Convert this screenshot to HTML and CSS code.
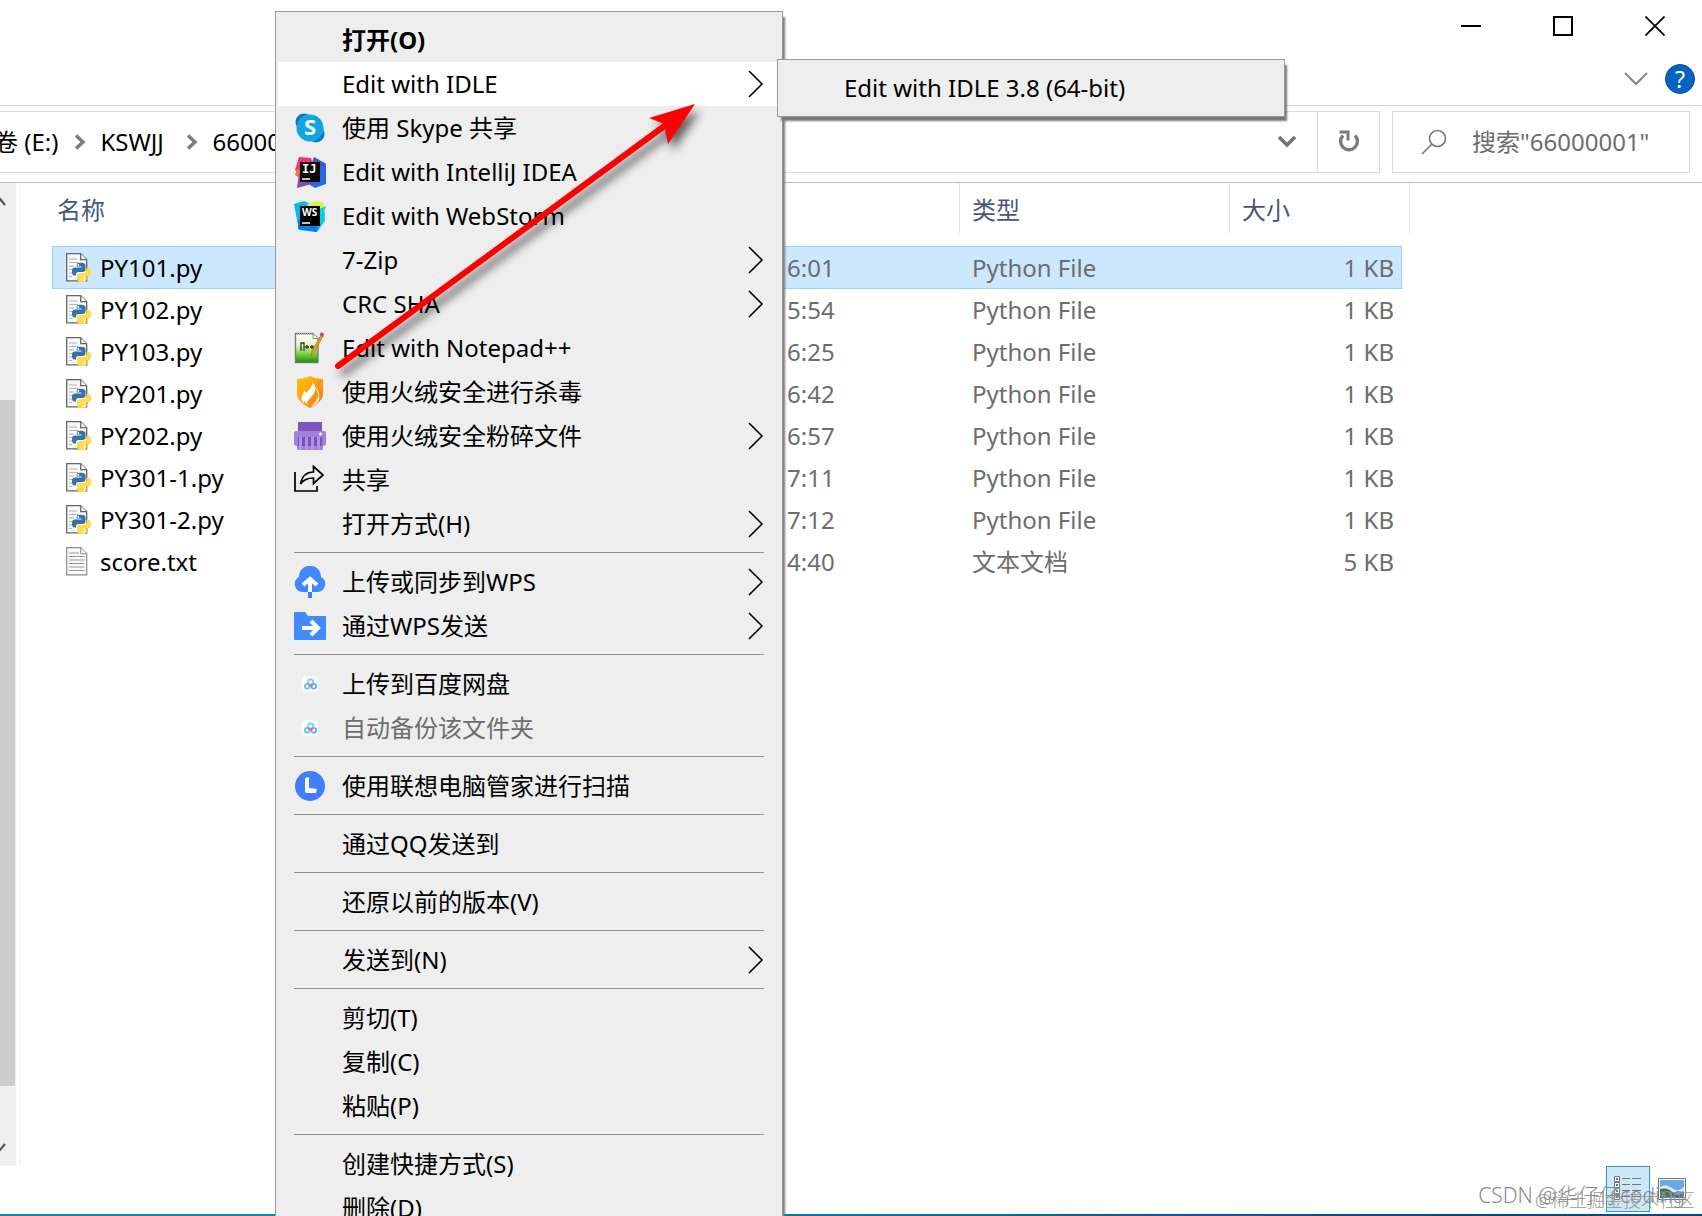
FILE: index.html
```html
<!DOCTYPE html>
<html lang="zh-CN">
<head>
<meta charset="utf-8">
<title>66000001</title>
<link rel="stylesheet" href="styles.css">
</head>
<body>
<svg class="defs" aria-hidden="true">
  <symbol id="chev" viewBox="0 0 16 28"><path d="M1 1l13 13L1 27" fill="none" stroke="#000" stroke-width="1.6"/></symbol>
  <symbol id="crumb" viewBox="0 0 12 16"><path d="M2 1.500l7 6.500-7 6.500" fill="none" stroke="#7d7d7d" stroke-width="3.400"/></symbol>
  <symbol id="py" viewBox="0 0 26 30">
    <path d="M.7.700h14l6 6v21.100H.7z" fill="#f7f7f7" stroke="#666" stroke-width="1.300"/>
    <path d="M14.700.700v6h6" fill="#fff" stroke="#666" stroke-width="1.300"/>
    <path d="M3 6h8M3 9.500h9M3 13h5M3 16.500h4M3 20h3M3 23.500h3" stroke="#b5b5b5" stroke-width="1.200"/>
    <path d="M11 10.500c1-1 6-1 7.500 0 1.500 1 1 2 1 5.500 0 2-1 3-3 3h-4c-2 0-2.500 1-2.500 3.500H8.500c-2 0-2.700-2-2.500-4.500 0-2.500 1-3.500 3.500-3.500h6v-1h-5z" fill="#3572a5"/>
    <circle cx="12.300" cy="12" r=".9" fill="#fff"/>
    <path d="M20.500 15h2c2 0 3 2 2.700 5-.2 2.500-1.200 3.500-3.500 3.500h-5v1H21c0 3-1 4.500-5 4.500-4.200 0-5-1.500-5-4v-2c0-2 1-3 3-3h4c2 0 2.500-1.500 2.500-5z" fill="#ffdb4d"/>
    <circle cx="18.500" cy="26.800" r=".9" fill="#fff"/>
  </symbol>
  <symbol id="txt" viewBox="0 0 26 30">
    <path d="M.7.700h14l6 6v21.100H.7z" fill="#f9f9f9" stroke="#8a8a8a" stroke-width="1.200"/>
    <path d="M14.700.700v6h6" fill="#fff" stroke="#8a8a8a"/>
    <path d="M3 6h10M3 9.500h15.500M3 13h15.500M3 16.500h15.500M3 20h15.500M3 23.500h15.500" stroke="#9a9a9a" stroke-width="1.200"/>
  </symbol>
  <symbol id="baidu" viewBox="0 0 32 32">
    <rect x="8" y="8" width="16" height="16" rx="4" fill="#fff"/>
    <g fill="none" stroke-width="1.700"><circle cx="13.200" cy="18.200" r="2.400" stroke="#5cc4f0"/><circle cx="19.800" cy="18.200" r="2.400" stroke="#52b4f4"/><circle cx="16.500" cy="14" r="2.600" stroke="#6fcff5"/><path d="M14 16l2.500 2 2.500-2" stroke="#f2617b"/></g>
  </symbol>
</svg>

<div class="window">
  <header class="titlebar">
    <button class="winbtn" aria-label="最小化"><svg width="20" height="20"><path d="M0 10h20" stroke="#000" stroke-width="2"/></svg></button>
    <button class="winbtn" aria-label="最大化"><svg width="20" height="20"><path d="M1 1h18v18H1z" fill="none" stroke="#000" stroke-width="2"/></svg></button>
    <button class="winbtn" aria-label="关闭"><svg width="20" height="20"><path d="M.5.500l19 19M19.500.500l-19 19" stroke="#000" stroke-width="1.800"/></svg></button>
  </header>
  <div class="ribbon">
    <button class="plain" aria-label="展开功能区"><svg width="24" height="14"><path d="M1 1l11 11L23 1" fill="none" stroke="#868686" stroke-width="2"/></svg></button>
    <button class="help" aria-label="帮助">?</button>
  </div>
  <div class="toolbar">
    <nav class="address" aria-label="地址">
      <a href="#">卷 (E:)</a><svg class="sep" width="12" height="16"><use href="#crumb"/></svg>
      <a class="folder" href="#">KSWJJ</a><svg class="sep" width="12" height="16"><use href="#crumb"/></svg>
      <a href="#">66000001</a>
      <button class="drop" aria-label="历史位置"><svg width="20" height="14"><path d="M2 2l8 8 8-8" fill="none" stroke="#757575" stroke-width="3.600"/></svg></button>
      <button class="refresh" aria-label="刷新"><svg width="22" height="24"><path d="M5 5.500A8.400 8.400 0 1 0 17 5.500" fill="none" stroke="#7b7b7b" stroke-width="3.400"/><path d="M1.500 2h8.500v8.500" fill="none" stroke="#7b7b7b" stroke-width="3"/></svg></button>
    </nav>
    <label class="search"><svg width="26" height="26"><circle cx="16.500" cy="9.500" r="8" fill="none" stroke="#777" stroke-width="1.600"/><path d="M10.500 15.500L1 25" stroke="#777" stroke-width="1.600"/></svg><input type="text" placeholder='搜索"66000001"' aria-label="搜索"></label>
  </div>
  <main class="content">
    <div class="scroll" aria-hidden="true">
      <svg class="scrollarrow" width="16" height="24"><path d="M-5 21L0 16l5 6" fill="none" stroke="#555" stroke-width="2.200"/></svg>
      <div class="thumb"></div>
      <svg class="scrollarrow" width="16" height="24"><path d="M-4 5l3 4 6-7" fill="none" stroke="#555" stroke-width="2.200"/></svg>
    </div>
    <div class="files">
      <table>
        <colgroup><col class="c-name"><col class="c-date"><col class="c-type"><col class="c-size"></colgroup>
        <thead><tr><th class="name">名称</th><th></th><th>类型</th><th class="last">大小</th></tr></thead>
        <tbody>
          <tr class="gap"><td colspan="4"></td></tr>
          <tr class="sel"><td class="name"><svg><use href="#py"/></svg>PY101.py</td><td class="time">6:01</td><td>Python File</td><td class="size">1 KB</td></tr>
          <tr><td class="name"><svg><use href="#py"/></svg>PY102.py</td><td class="time">5:54</td><td>Python File</td><td class="size">1 KB</td></tr>
          <tr><td class="name"><svg><use href="#py"/></svg>PY103.py</td><td class="time">6:25</td><td>Python File</td><td class="size">1 KB</td></tr>
          <tr><td class="name"><svg><use href="#py"/></svg>PY201.py</td><td class="time">6:42</td><td>Python File</td><td class="size">1 KB</td></tr>
          <tr><td class="name"><svg><use href="#py"/></svg>PY202.py</td><td class="time">6:57</td><td>Python File</td><td class="size">1 KB</td></tr>
          <tr><td class="name"><svg><use href="#py"/></svg>PY301-1.py</td><td class="time">7:11</td><td>Python File</td><td class="size">1 KB</td></tr>
          <tr><td class="name"><svg><use href="#py"/></svg>PY301-2.py</td><td class="time">7:12</td><td>Python File</td><td class="size">1 KB</td></tr>
          <tr><td class="name"><svg><use href="#txt"/></svg>score.txt</td><td class="time">4:40</td><td>文本文档</td><td class="size">5 KB</td></tr>
        </tbody>
      </table>
    </div>
  </main>
  <footer class="status">
    <button class="view on" aria-label="详细信息"><svg width="28" height="26"><g fill="#fff" stroke="#777"><path d="M.5.500h5v5h-5zM.5 6.500h5v5h-5zM.5 12.500h5v5h-5zM.5 18.500h5v5h-5z"/></g><path d="M2 3h2M2 9h2M2 15h2M2 21h2" stroke="#3b82c4" stroke-width="2"/><path d="M8 2.500h8m2 0h9M8 8.500h8m2 0h9M8 14.500h8m2 0h9M8 20.500h8m2 0h9" stroke="#777"/></svg></button>
    <button class="view" aria-label="大缩略图"><svg width="28" height="22"><path d="M.5.500h27v21H.5z" fill="#fff" stroke="#777"/><path d="M2 2h24v18H2z" fill="#6ba8ea"/><path d="M2 9q6-4 12 1t12-1v5H2z" fill="#d5e8f6"/><path d="M2 11q8-2 12 3t12 1v3H2z" fill="#47774b"/><path d="M2 17h24v3H2z" fill="#3b6ea0"/></svg></button>
  </footer>
  <div class="taskbar"></div>
</div>

<div class="menu main" role="menu">
  <button class="item bold"><span class="ico"></span>打开(O)</button>
  <button class="item hot"><span class="ico"></span>Edit with IDLE<svg class="more"><use href="#chev"/></svg></button>
  <button class="item"><svg class="ico" viewBox="0 0 32 32"><circle cx="10" cy="10" r="8.500" fill="#0078c8"/><circle cx="22" cy="22" r="8.500" fill="#0a78c6"/><circle cx="16" cy="16" r="13.500" fill="#11a6df"/><text x="16" y="23" class="skype">S</text></svg>使用 Skype 共享</button>
  <button class="item"><svg class="ico" viewBox="0 0 32 32"><path d="M5 1l12 1 4 12-13 5-7-5z" fill="#f2346b"/><path d="M3 13l9 2-3 9-8-5z" fill="#ef7b25"/><path d="M5 17l13 11-15 4z" fill="#8f4f9e"/><path d="M20 1l12 7v20l-11 4-8-5z" fill="#2b68e8"/><path d="M20 1l12 7-9 5-6-4z" fill="#4b56c8"/><path d="M6 6h20v20H6z" fill="#090909"/><text x="8" y="17" class="jb">IJ</text><path d="M8 23h8" stroke="#fff" stroke-width="1.500"/></svg>Edit with IntelliJ IDEA</button>
  <button class="item"><svg class="ico" viewBox="0 0 32 32"><path d="M0 4l10-3 14 6 7 6-1 9-7 10-18-2z" fill="#00b9ed"/><path d="M4 20l20 3-1 9-19-3z" fill="#087cf5"/><path d="M13 4l10-3 7 2-2 8-12 2z" fill="#dcf047"/><path d="M25 9l7-3-2 6 1 9-6 4z" fill="#10cce0"/><path d="M6 6h20v20H6z" fill="#000"/><text x="8" y="16" class="jb ws">WS</text><path d="M8 23h8" stroke="#fff" stroke-width="1.500"/></svg>Edit with WebStorm</button>
  <button class="item"><span class="ico"></span>7-Zip<svg class="more"><use href="#chev"/></svg></button>
  <button class="item"><span class="ico"></span>CRC SHA<svg class="more"><use href="#chev"/></svg></button>
  <button class="item"><svg class="ico" viewBox="0 0 32 32"><defs><linearGradient id="np" x2="0" y2="1"><stop stop-color="#fff"/><stop offset=".4" stop-color="#e6f5c4"/><stop offset=".75" stop-color="#6cca26"/><stop offset="1" stop-color="#138c19"/></linearGradient></defs><path d="M1.500 1.500H19l5 5v24H1.500z" fill="url(#np)" stroke="#777" stroke-width="1.300"/><path d="M3 2h16" stroke="#aaa" stroke-width="2" stroke-dasharray="1 1"/><path d="M19 1.500v5h5" fill="#fff" stroke="#888"/><path d="M7 19v-8h3v8M11 15h4m-2-2v4m3-2h4m-2-2v4" fill="none" stroke="#333" stroke-width="1.300"/><path d="M17 24l1-5L27 3l2 1-9 17z" fill="#e6a32e" stroke="#a66b18" stroke-width=".7"/><path d="M26 3l1-3 3 2-1 3z" fill="#c23b4d"/></svg>Edit with Notepad++</button>
  <button class="item"><svg class="ico" viewBox="0 0 32 32"><defs><linearGradient id="hr" x2="1" y2="1"><stop stop-color="#ffc414"/><stop offset=".5" stop-color="#ffa00c"/><stop offset="1" stop-color="#f46e1b"/></linearGradient></defs><path d="M16 0c4 2 8 3 13 3v15c0 6-6 10-13 14C9 28 3 24 3 18V3c5 0 9-1 13-3z" fill="url(#hr)"/><path d="M18 5c1 4-1 7-4 10-4 4-6 9-1 13 0-6 9-8 8-16 5 6 4 12-4 18 6-2 9-5 8-11 0-5-5-8-7-14z" fill="#fff"/><path d="M11 15c-4 5-5 9-1 12 0-5 6-7 7-11-3 2-5 2-6-1z" fill="#fff"/></svg>使用火绒安全进行杀毒</button>
  <button class="item"><svg class="ico" viewBox="0 0 32 32"><path d="M4 2h24v10H4z" fill="#8058bd"/><path d="M2 11h28q2 0 2 2v10q0 3-3 3v3q0 1-2 1H5q-2 0-2-1v-3q-3 0-3-3V13q0-2 2-2z" fill="#a080dc"/><path d="M4 17h24v9H4z" fill="#7951b4"/><path d="M5 17h3v13H5zM11 17h3v13h-3zM17 17h3v13h-3zM23 17h3v13h-3z" fill="#b091e4"/><circle cx="26.500" cy="14" r="1.500" fill="#fff"/></svg>使用火绒安全粉碎文件<svg class="more"><use href="#chev"/></svg></button>
  <button class="item"><svg class="ico" viewBox="0 0 32 32"><g fill="none" stroke="#000" stroke-width="1.700"><path d="M1 8v19h22v-5"/><path d="M6.500 20C8 12 12 8 19.500 8V2.500L29 11l-9.500 8.500V14C14 14 10 15 6.500 20z"/></g></svg>共享</button>
  <button class="item"><span class="ico"></span>打开方式(H)<svg class="more"><use href="#chev"/></svg></button>
  <hr>
  <button class="item"><svg class="ico" viewBox="0 0 32 32"><path d="M8 26a8 8 0 0 1-3-15C5-4 27-4 27 11a8 8 0 0 1-3 15z" fill="#4189fb"/><path d="M9 19l7-6 7 6M16 14v12" fill="none" stroke="#fff" stroke-width="4"/><path d="M14 26h4v6h-4z" fill="#3686f7"/></svg>上传或同步到WPS<svg class="more"><use href="#chev"/></svg></button>
  <button class="item"><svg class="ico" viewBox="0 0 32 32"><path d="M0 3q0-1 1-1h10l3 4h17q1 0 1 1v22q0 1-1 1H1q-1 0-1-1z" fill="#418aff"/><path d="M8 18h15M17 11l7 7-7 7" fill="none" stroke="#fff" stroke-width="4"/></svg>通过WPS发送<svg class="more"><use href="#chev"/></svg></button>
  <hr>
  <button class="item"><svg class="ico"><use href="#baidu"/></svg>上传到百度网盘</button>
  <button class="item" disabled><svg class="ico"><use href="#baidu"/></svg>自动备份该文件夹</button>
  <hr>
  <button class="item"><svg class="ico" viewBox="0 0 32 32"><circle cx="16" cy="16" r="15" fill="#427dfa"/><path d="M11 8l4-1v11l8 1-1 4H13q-2 0-2-2z" fill="#fff"/></svg>使用联想电脑管家进行扫描</button>
  <hr>
  <button class="item"><span class="ico"></span>通过QQ发送到</button>
  <hr>
  <button class="item"><span class="ico"></span>还原以前的版本(V)</button>
  <hr>
  <button class="item"><span class="ico"></span>发送到(N)<svg class="more"><use href="#chev"/></svg></button>
  <hr>
  <button class="item"><span class="ico"></span>剪切(T)</button>
  <button class="item"><span class="ico"></span>复制(C)</button>
  <button class="item"><span class="ico"></span>粘贴(P)</button>
  <hr>
  <button class="item"><span class="ico"></span>创建快捷方式(S)</button>
  <button class="item"><span class="ico"></span>删除(D)</button>
</div>
<div class="menu sub" role="menu">
  <button class="item"><span class="ico"></span>Edit with IDLE 3.8 (64-bit)</button>
</div>
<svg class="pointer" viewBox="0 0 380 280" aria-hidden="true"><path d="M8 266L337 24" stroke="#f00" stroke-width="6" stroke-linecap="round"/><path d="M365 4l-46 14 15 6 4 20z" fill="#f00"/></svg>
<div class="mark juejin">@稀土掘金技术社区</div>
<div class="mark csdn">CSDN @华仔仔coding</div>
</body>
</html>
```
FILE: styles.css
```css
* { box-sizing: border-box; }
body {
  margin: 0;
  height: 100vh;
  overflow: hidden;
  position: relative;
  background: #fff;
  color: #000;
  font: 24px/32px "Noto Sans", "Noto Sans CJK SC", sans-serif;
}
button, input { font: inherit; color: inherit; border: 0; padding: 0; background: none; }
a { color: inherit; text-decoration: none; }
svg { display: block; flex: none; }
.defs { position: absolute; width: 0; height: 0; }

.window { display: flex; flex-direction: column; height: 100%; }
.titlebar { display: flex; justify-content: flex-end; height: 52px; padding-right: 1px; }
.winbtn { width: 92px; display: grid; place-items: center; }
.ribbon {
  display: flex; justify-content: flex-end; align-items: center; gap: 17px;
  height: 54px; padding-right: 7px; border-bottom: 1px solid #d9d9d9;
}
.help {
  width: 30px; height: 30px; border-radius: 50%;
  background: #0563c1; border: 1px solid #0a4c94; color: #fff; line-height: 28px; font-size: 23px;
}
.toolbar {
  display: flex; gap: 12px; height: 77px; padding: 5px 12px 9px 0;
  border-bottom: 1px solid #bcbcbc;
}
.address {
  flex: 1; display: flex; align-items: center;
  border: 1px solid #d9d9d9; border-left: 0; white-space: nowrap;
  margin-left: -6px;
}
.address .sep { margin: 0 14px 0 16px; }
.folder { min-width: 70px; }
.drop { margin-left: auto; width: 60px; display: grid; place-items: center; }
.refresh { width: 62px; align-self: stretch; border-left: 1px solid #d9d9d9; display: grid; place-items: center; }
.search { width: 298px; display: flex; align-items: center; gap: 25px; border: 1px solid #d9d9d9; padding-left: 28px; }
.search input { flex: 1; min-width: 0; outline: 0; }
.search input::placeholder { color: #6d6d6d; opacity: 1; }

.content { flex: 1; display: flex; min-height: 0; }
.scroll { width: 21px; padding-right: 3px; border-right: 2px solid #f7f7f7; background: #efefef content-box; display: flex; flex-direction: column; }
.thumb { flex: 1; width: 15px; margin: 193px 0 56px; background: #cdcdcd; }
.files { flex: 1; padding-left: 31px; }
table { border-collapse: separate; border-spacing: 0; table-layout: fixed; width: 1350px; }
.c-name { width: 735px; }
.c-date { width: 172px; }
.c-type { width: 270px; }
.c-size { width: 173px; }
th { height: 50px; padding: 3px 0 0 12px; text-align: left; font-weight: 400; color: #44597b; border-left: 1px solid #e2e2e2; }
th.name { padding-left: 5px; border: 0; }
th:nth-child(2) { border: 0; }
th.last { position: relative; }
th.last::after { content: ""; position: absolute; top: 0; bottom: 0; left: 179px; border-left: 1px solid #e2e2e2; }
td { height: 42px; padding: 0 0 0 13px; color: #6d6d6d; white-space: nowrap; }
.gap td { height: 13px; }
td.name { display: flex; align-items: center; gap: 8px; color: #000; border-left: 1px solid transparent; }
td.name svg { width: 26px; height: 30px; }
td.time { padding: 0; }
td.size { padding: 0 8px 0 0; text-align: right; }
.sel td { height: 43px; background: #cce8ff; border: solid #99d1ff; border-width: 1px 0; }
.sel td.size { border-right-width: 1px; padding-right: 7px; }
.sel td.name { border-left-width: 1px; }

.status { display: flex; justify-content: flex-end; height: 48px; padding-right: 8px; }
.view { width: 44px; height: 46px; display: grid; place-items: center; }
.view.on { background: #cce8f6; border: 1px solid #3399cc; }
.taskbar { height: 2px; background: linear-gradient(90deg, #0f87b5 20%, #0a70b0 50%, #064a8c 85%); }

.menu {
  position: absolute; width: 508px; padding: 6px 2px;
  background: #eee; border: 1px solid #999; box-shadow: 3px 5px 2px -1px #777;
}
.main { left: 275px; top: 11px; }
.sub { left: 777px; top: 59px; }
.item { display: flex; align-items: center; gap: 16px; width: 100%; height: 44px; padding: 0 16px; white-space: nowrap; }
.item:disabled { color: #6d6d6d; }
.bold { font-weight: 700; }
.hot { background: #fff; }
.ico { width: 32px; height: 32px; flex: none; }
.more { width: 16px; height: 28px; margin-left: auto; }
hr { height: 14px; margin: 0 16px; border: 0; background: linear-gradient(#919191, #919191) 0 6px / 100% 1px no-repeat; }
.skype { font: 700 22px "Open Sans", sans-serif; fill: #fff; text-anchor: middle; }
.jb { font: 700 12px "DejaVu Sans Mono", monospace; fill: #fff; }
.ws { font: 700 10px "Open Sans", sans-serif; }

.pointer { position: absolute; left: 330px; top: 100px; width: 380px; height: 280px; filter: drop-shadow(5px 7px 5px rgba(0,0,0,.6)); fill: none; }
.mark { position: absolute; white-space: nowrap; line-height: 28px; }
.csdn { right: 17px; bottom: 7px; font-size: 21px; color: #8b8b8b; font-weight: 300; }
.juejin { right: 7px; bottom: 2px; font-size: 18px; color: #999; font-weight: 300; }
```
